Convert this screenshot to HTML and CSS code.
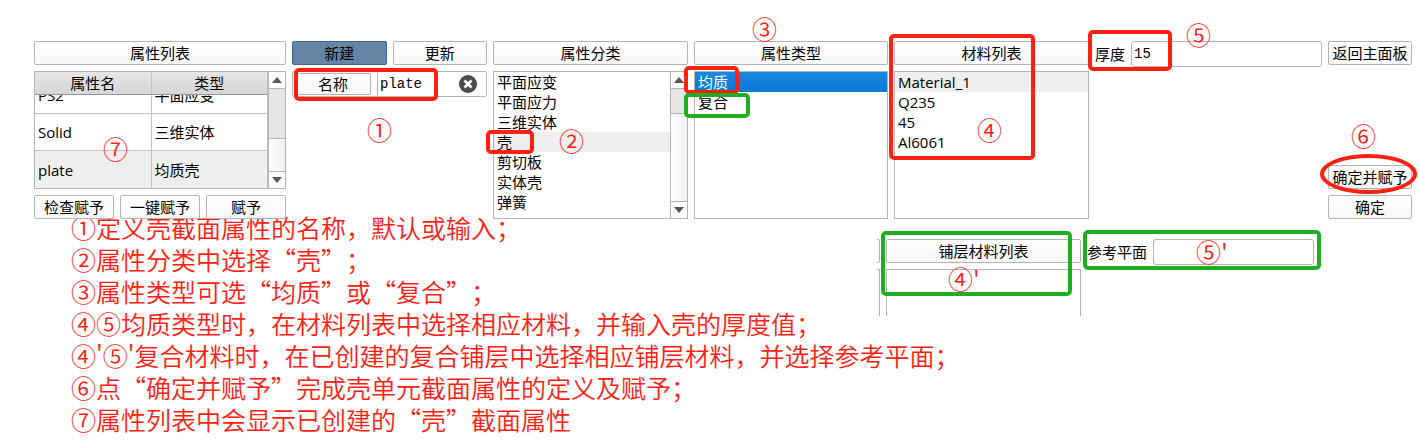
FILE: index.html
```html
<!DOCTYPE html>
<html lang="zh-CN">
<head>
<meta charset="utf-8">
<title>属性</title>
<link rel="stylesheet" href="styles.css">
</head>
<body>
<main class="page">
  <div class="panels">
    <section class="col">
      <button class="btn">属性列表</button>
      <div class="table-box">
        <table class="props">
          <thead><tr><th>属性名</th><th>类型</th></tr></thead>
          <tbody>
            <tr class="cut"><td><div class="clip"><span>PS2</span></div></td><td><div class="clip"><span>平面应变</span></div></td></tr>
            <tr><td>Solid</td><td>三维实体</td></tr>
            <tr class="current"><td>plate</td><td>均质壳</td></tr>
          </tbody>
        </table>
        <div class="scroll" aria-hidden="true">
          <span class="arrow"><svg viewBox="0 0 10 6"><path d="M0 6 5 0 10 6z"/></svg></span>
          <span class="thumb tall"></span>
          <span class="track"></span>
          <span class="arrow down"><svg viewBox="0 0 10 6"><path d="M0 0H10L5 6z"/></svg></span>
        </div>
      </div>
      <div class="btn-row">
        <button class="btn">检查赋予</button>
        <button class="btn">一键赋予</button>
        <button class="btn">赋予</button>
      </div>
      <span class="mark m7">⑦</span>
    </section>

    <section class="col">
      <div class="btn-row">
        <button class="btn active">新建</button>
        <button class="btn">更新</button>
      </div>
      <div class="name-box">
        <label class="name-label" for="name">名称</label>
        <input class="name-input" id="name" type="text" value="plate">
        <button class="clear" aria-label="清除">
          <svg viewBox="0 0 18 18"><circle cx="9" cy="9" r="9"/><path d="M5.5 5.5 12.5 12.5M12.5 5.5 5.5 12.5"/></svg>
        </button>
      </div>
      <span class="ring r1"></span>
      <span class="mark m1">①</span>
    </section>

    <section class="col">
      <button class="btn">属性分类</button>
      <div class="list-box">
        <ul class="list" role="listbox" aria-label="属性分类">
          <li role="option">平面应变</li>
          <li role="option">平面应力</li>
          <li role="option">三维实体</li>
          <li role="option" class="current">壳</li>
          <li role="option">剪切板</li>
          <li role="option">实体壳</li>
          <li role="option">弹簧</li>
        </ul>
        <div class="scroll" aria-hidden="true">
          <span class="arrow"><svg viewBox="0 0 10 6"><path d="M0 6 5 0 10 6z"/></svg></span>
          <span class="thumb"></span>
          <span class="track"></span>
          <span class="arrow down"><svg viewBox="0 0 10 6"><path d="M0 0H10L5 6z"/></svg></span>
        </div>
      </div>
      <span class="ring r2"></span>
      <span class="mark m2">②</span>
    </section>

    <section class="col">
      <button class="btn">属性类型</button>
      <div class="list-box">
        <ul class="list" role="listbox" aria-label="属性类型">
          <li role="option" class="selected" aria-selected="true">均质</li>
          <li role="option">复合</li>
        </ul>
      </div>
      <span class="ring r3"></span>
      <span class="ring green r3b"></span>
      <span class="mark m3">③</span>
    </section>

    <section class="col">
      <button class="btn">材料列表</button>
      <div class="list-box">
        <ul class="list" role="listbox" aria-label="材料列表">
          <li role="option" class="current">Material_1</li>
          <li role="option">Q235</li>
          <li role="option">45</li>
          <li role="option">Al6061</li>
        </ul>
      </div>
      <span class="ring r4"></span>
      <span class="mark m4">④</span>
    </section>

    <section class="col">
      <div class="field">
        <label for="thick">厚度</label>
        <input class="text" id="thick" type="text" value="15">
      </div>
      <span class="ring r5"></span>
      <span class="mark m5">⑤</span>
    </section>

    <section class="col">
      <button class="btn">返回主面板</button>
      <button class="btn bottom">确定并赋予</button>
      <button class="btn">确定</button>
      <span class="ring r6"></span>
      <span class="mark m6">⑥</span>
    </section>
  </div>

  <div class="lower">
    <div class="layers">
      <div class="stub"><span class="stub-btn"></span><span class="stub-list"></span></div>
      <section class="col">
        <button class="btn">铺层材料列表</button>
        <div class="list-box open"></div>
        <span class="ring green r7"></span>
        <span class="mark m8">④'</span>
      </section>
      <section class="col">
        <div class="field">
          <label for="plane">参考平面</label>
          <input class="text" id="plane" type="text">
        </div>
        <span class="ring green r8"></span>
        <span class="mark m9">⑤'</span>
      </section>
    </div>
    <div class="notes">
      <p>①定义壳截面属性的名称，默认或输入；</p>
      <p>②属性分类中选择“壳”；</p>
      <p>③属性类型可选“均质”或“复合”；</p>
      <p>④⑤均质类型时，在材料列表中选择相应材料，并输入壳的厚度值；</p>
      <p>④'⑤'复合材料时，在已创建的复合铺层中选择相应铺层材料，并选择参考平面；</p>
      <p>⑥点“确定并赋予”完成壳单元截面属性的定义及赋予；</p>
      <p>⑦属性列表中会显示已创建的“壳”截面属性</p>
    </div>
  </div>
</main>
</body>
</html>
```

FILE: styles.css
```css
* { box-sizing: border-box; }

body {
  margin: 0;
  background: #fff;
  color: #000;
  font: 15px/20px "Open Sans", "Noto Sans CJK SC", sans-serif;
}

.page { padding: 41px 7px 0 34px; }

.panels {
  display: grid;
  grid-template-columns:
    minmax(0, 252fr) minmax(0, 195fr) minmax(0, 195fr) minmax(0, 194fr)
    minmax(0, 195fr) minmax(0, 227fr) minmax(0, 84fr);
  gap: 6px;
}

.col {
  position: relative;
  display: flex;
  flex-direction: column;
  gap: 6px;
  min-width: 0;
}

.btn {
  height: 24px;
  padding: 0;
  border: 1px solid #b4b4b4;
  border-radius: 2px;
  background: linear-gradient(#fff, #f8f8f8);
  color: #000;
  font: 15px/20px "Noto Sans CJK SC", sans-serif;
  white-space: nowrap;
}
.btn.active { background: #6485a6; border-color: #3f668c; }
.btn.bottom { margin-top: auto; }

.btn-row { display: flex; gap: 6px; }
.btn-row .btn { flex: 1; min-width: 0; }

/* property table */
.table-box {
  display: flex;
  border: 1px solid #b4b4b4;
}
.props {
  flex: 1;
  table-layout: fixed;
  border-collapse: separate;
  border-spacing: 0;
}
.props th {
  height: 23px;
  padding: 0;
  border-bottom: 1px solid #979797;
  border-right: 1px solid #c3c3c3;
  background: linear-gradient(#e6e6e6, #d6d6d6);
  font-weight: 400;
}
.props td {
  width: 50%;
  height: 37px;
  padding: 0 3px;
  border-bottom: 1px solid #c3c3c3;
  border-right: 1px solid #c3c3c3;
}
.props tr:last-child td { border-bottom: 0; }
.props .cut td { height: 19px; }
.props .current td { background: #efefef; }
.clip {
  display: flex;
  align-items: flex-end;
  height: 18px;
  overflow: hidden;
}
.clip span { line-height: 36px; }

/* scroll bar */
.scroll {
  display: flex;
  flex-direction: column;
  flex: none;
  width: 17px;
  border-left: 1px solid #b4b4b4;
}
.arrow {
  display: flex;
  align-items: center;
  justify-content: center;
  height: 17px;
  border-bottom: 1px solid #b4b4b4;
  background: #fcfcfc;
}
.arrow.down { border-top: 1px solid #b4b4b4; border-bottom: 0; }
.arrow svg { width: 10px; height: 6px; fill: #555; }
.thumb {
  height: 25px;
  border-bottom: 1px solid #b4b4b4;
  background: #e6e6e6;
}
.thumb.tall { height: 50px; }
.track { flex: 1; background: linear-gradient(90deg, #fff, #f0f0f0); }

/* list boxes */
.list-box {
  display: flex;
  flex: 1;
  min-height: 148px;
  border: 1px solid #b4b4b4;
}
.list { flex: 1; margin: 0; padding: 0; list-style: none; }
.list li { height: 20px; padding-left: 3px; }
.list .current { background: #efefef; }
.list .selected { background: linear-gradient(#1a88e0, #0a78d6); color: #fff; }

/* name row */
.name-box {
  display: flex;
  align-items: center;
  height: 26px;
  padding: 0 9px 0 4px;
  border: 1px solid #b4b4b4;
  border-radius: 2px;
}
.name-label {
  flex: none;
  width: 74px;
  height: 22px;
  margin-right: 6px;
  padding-right: 2px;
  border: 1px solid #b4b4b4;
  border-radius: 2px;
  background: linear-gradient(#fff, #f8f8f8);
  text-align: center;
}
.name-input {
  flex: 1;
  min-width: 0;
  height: 24px;
  padding: 0 2px;
  border: 0;
  border-left: 1px solid #b4b4b4;
  background: none;
  font: 14px/20px "Liberation Mono", monospace;
}
.clear { flex: none; width: 18px; height: 18px; padding: 0; border: 0; background: none; }
.clear svg { display: block; width: 18px; height: 18px; fill: #4b4b4b; }
.clear path { stroke: #fff; stroke-width: 2.8; }

/* labelled fields */
.field { display: flex; align-items: center; gap: 6px; height: 26px; white-space: nowrap; }
.text {
  flex: 1;
  min-width: 0;
  height: 26px;
  padding: 0 2px;
  border: 1px solid #b4b4b4;
  border-radius: 3px;
  background: #fff;
  font: 14px/20px "Liberation Mono", monospace;
}

/* lower area: layer panels beside and over the notes */
.lower { display: grid; margin-top: -8px; }
.layers, .notes { grid-area: 1 / 1; }
.layers {
  display: grid;
  grid-template-columns: minmax(0, 837fr) 3px minmax(0, 195fr) minmax(0, 227fr) minmax(0, 92fr);
  gap: 6px;
  align-self: start;
  padding-top: 28px;
}
.stub { grid-column: 2; display: flex; flex-direction: column; gap: 6px; }
.stub-btn { height: 24px; border: 1px solid #b4b4b4; border-left: 0; border-radius: 0 2px 2px 0; }
.stub-list { flex: 1; border: 1px solid #b4b4b4; border-width: 1px 1px 0 0; }
.list-box.open { min-height: 47px; border-bottom: 0; }

.notes {
  padding-left: 37px;
  color: #ff2012;
  font: 350 25px/32px "Noto Sans CJK SC", sans-serif;
  text-spacing-trim: space-all;
}
.notes p { margin: 0; }

/* call-outs */
.ring {
  position: absolute;
  border: 4px solid #ff2012;
  border-radius: 5px;
  pointer-events: none;
}
.ring.green { border-color: #1fae1f; }
.mark {
  position: absolute;
  color: #ff2012;
  font: 350 25px/24px "Noto Sans CJK SC", sans-serif;
  white-space: nowrap;
  pointer-events: none;
}

.r1 { left: 2px; top: 27px; width: 144px; height: 33px; }
.r2 { left: -7px; top: 89px; width: 48px; height: 24px; }
.r3 { left: -10px; top: 25px; width: 55px; height: 28px; }
.r3b { left: -10px; top: 52px; width: 66px; height: 25px; }
.r4 { left: -5px; top: -7px; width: 146px; height: 126px; }
.r5 { left: -7px; top: -11px; width: 84px; height: 41px; }
.r6 { left: -8px; right: -5px; top: 113px; height: 40px; border-radius: 50%; }
.r7 { left: -5px; right: 9px; top: -8px; height: 65px; }
.r8 { left: -4px; right: -7px; top: -9px; height: 40px; }

.m1 { left: 75px; top: 76px; }
.m2 { left: 66px; top: 87px; }
.m3 { left: 58px; top: -25px; }
.m4 { left: 83px; top: 76px; }
.m5 { left: 91px; top: -19px; }
.m6 { left: 23px; top: 82px; }
.m7 { left: 69px; top: 95px; }
.m8 { left: 62px; top: 27px; }
.m9 { left: 109px; top: 0; }
```
